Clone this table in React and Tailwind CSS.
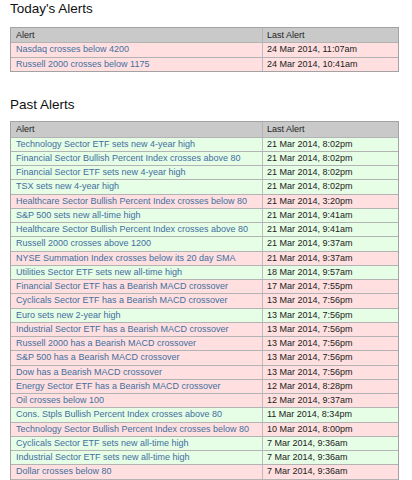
import React from "react";

/* ---------------- ALERT DATA ---------------- */
const todays = [
  { text: "Nasdaq crosses below 4200", date: "24 Mar 2014, 11:07am", up: false },
  { text: "Russell 2000 crosses below 1175", date: "24 Mar 2014, 10:41am", up: false },
];

const past = [
  { text: "Technology Sector ETF sets new 4-year high", date: "21 Mar 2014, 8:02pm", up: true },
  { text: "Financial Sector Bullish Percent Index crosses above 80", date: "21 Mar 2014, 8:02pm", up: true },
  { text: "Financial Sector ETF sets new 4-year high", date: "21 Mar 2014, 8:02pm", up: true },
  { text: "TSX sets new 4-year high", date: "21 Mar 2014, 8:02pm", up: true },
  { text: "Healthcare Sector Bullish Percent Index crosses below 80", date: "21 Mar 2014, 3:20pm", up: false },
  { text: "S&P 500 sets new all-time high", date: "21 Mar 2014, 9:41am", up: true },
  { text: "Healthcare Sector Bullish Percent Index crosses above 80", date: "21 Mar 2014, 9:41am", up: true },
  { text: "Russell 2000 crosses above 1200", date: "21 Mar 2014, 9:37am", up: true },
  { text: "NYSE Summation Index crosses below its 20 day SMA", date: "21 Mar 2014, 9:37am", up: false },
  { text: "Utilities Sector ETF sets new all-time high", date: "18 Mar 2014, 9:57am", up: true },
  { text: "Financial Sector ETF has a Bearish MACD crossover", date: "17 Mar 2014, 7:55pm", up: false },
  { text: "Cyclicals Sector ETF has a Bearish MACD crossover", date: "13 Mar 2014, 7:56pm", up: false },
  { text: "Euro sets new 2-year high", date: "13 Mar 2014, 7:56pm", up: true },
  { text: "Industrial Sector ETF has a Bearish MACD crossover", date: "13 Mar 2014, 7:56pm", up: false },
  { text: "Russell 2000 has a Bearish MACD crossover", date: "13 Mar 2014, 7:56pm", up: false },
  { text: "S&P 500 has a Bearish MACD crossover", date: "13 Mar 2014, 7:56pm", up: false },
  { text: "Dow has a Bearish MACD crossover", date: "13 Mar 2014, 7:56pm", up: false },
  { text: "Energy Sector ETF has a Bearish MACD crossover", date: "12 Mar 2014, 8:28pm", up: false },
  { text: "Oil crosses below 100", date: "12 Mar 2014, 9:37am", up: false },
  { text: "Cons. Stpls Bullish Percent Index crosses above 80", date: "11 Mar 2014, 8:34pm", up: true },
  { text: "Technology Sector Bullish Percent Index crosses below 80", date: "10 Mar 2014, 8:00pm", up: false },
  { text: "Cyclicals Sector ETF sets new all-time high", date: "7 Mar 2014, 9:36am", up: true },
  { text: "Industrial Sector ETF sets new all-time high", date: "7 Mar 2014, 9:36am", up: true },
  { text: "Dollar crosses below 80", date: "7 Mar 2014, 9:36am", up: false },
  // next row only peeks in at the bottom edge
  { text: "", date: "", up: true },
];

function AlertTable({ rows }) {
  return (
    <div className="w-[389px] border border-[#a3a3a3] text-[9px] leading-none">
      {/* header */}
      <div className="flex h-[14.25px] bg-[#c9c9c9] text-[#222]">
        <div className="w-[252px] flex items-center pl-[5px] border-r border-[#b4b4b4]">Alert</div>
        <div className="flex-1 flex items-center pl-[4px]">Last Alert</div>
      </div>

      {rows.map((row, i) => (
        <div
          key={i}
          className={`flex h-[14.25px] border-t border-[#b3b3b3] ${
            row.up ? "bg-[#e6fde6]" : "bg-[#ffdfdf]"
          }`}
        >
          <div className="w-[252px] flex items-center pl-[5px] border-r border-[#bcbcbc] text-[#3f6f9f] whitespace-nowrap overflow-hidden">
            {row.text}
          </div>
          <div className="flex-1 flex items-center pl-[4px] text-[#222]">{row.date}</div>
        </div>
      ))}
    </div>
  );
}

export default function App() {
  return (
    <div
      className="h-[480px] overflow-hidden bg-white pl-[10px]"
      style={{ fontFamily: '"Liberation Sans", Arial, sans-serif' }}
    >
      <h2 className="pt-[1px] text-[13.5px] leading-[15.5px] text-[#111]">Today's Alerts</h2>
      <div className="mt-[10.5px]">
        <AlertTable rows={todays} />
      </div>

      <h2 className="mt-[25px] text-[13.5px] leading-[15.5px] text-[#111]">Past Alerts</h2>
      <div className="mt-[9px]">
        <AlertTable rows={past} />
      </div>
    </div>
  );
}
